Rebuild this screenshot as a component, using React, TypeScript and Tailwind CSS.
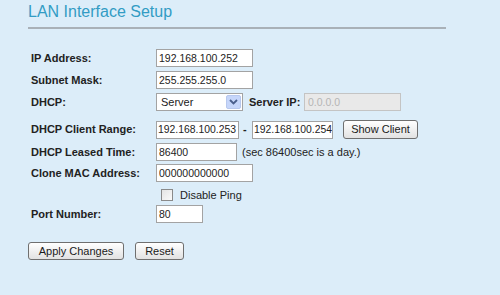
import React from "react";

const inputCls =
  "h-[18px] border border-[#a3a3a3] bg-white pl-[2px] text-[10.5px] text-[#222] outline-none font-['Liberation_Sans',Arial,sans-serif]";
const rangeCls =
  "h-[18px] border border-[#a3a3a3] bg-white pl-[1px] text-[10.4px] text-[#222] outline-none font-['Liberation_Sans',Arial,sans-serif]";

function Label({ children }: { children: React.ReactNode }) {
  return (
    <div className="w-[128px] shrink-0 pl-[3px] text-[11px] font-bold text-[#222]">
      {children}
    </div>
  );
}

function Btn({ children, w }: { children: React.ReactNode; w: string }) {
  return (
    <button
      className={`${w} flex items-center justify-center rounded-[3px] border border-[#6f6f6f] bg-gradient-to-b from-[#ffffff] to-[#e2e2e2] text-[11px] text-[#1a1a1a]`}
    >
      {children}
    </button>
  );
}

export default function App() {
  return (
    <div className="h-[295px] w-[500px] overflow-hidden bg-[#dcedf9] px-[28px] font-['Liberation_Sans',Arial,sans-serif]">
      <div className="pt-[3px]">
        <div className="h-[18px] text-[16px] leading-[18px] text-[#329cc4]">LAN Interface Setup</div>
        <div className="mt-[6px] h-[2px] w-[418px] bg-[#a9b1b8]" />
      </div>

      <div className="mt-[20px] flex flex-col">
        <div className="flex h-[18px] items-center">
          <Label>IP Address:</Label>
          <input readOnly className={`${inputCls} w-[97px]`} defaultValue="192.168.100.252" />
        </div>
        <div className="mt-[4px] flex h-[18px] items-center">
          <Label>Subnet Mask:</Label>
          <input readOnly className={`${inputCls} w-[97px]`} defaultValue="255.255.255.0" />
        </div>
        <div className="mt-[4px] flex h-[18px] items-center">
          <Label>DHCP:</Label>
          <div className="flex h-[18px] w-[87px] items-center justify-between border border-[#a3a3a3] bg-white pl-[4px] pr-[1px]">
            <span className="text-[11px] text-[#222]">Server</span>
            <span className="flex h-[14px] w-[15px] items-center justify-center rounded-[2px] border border-[#b7c8ee] bg-[#c6d6fa]">
              <svg width="9" height="6" viewBox="0 0 9 6">
                <path d="M1 1 L4.5 4.5 L8 1" fill="none" stroke="#4a5f8c" strokeWidth="1.8" />
              </svg>
            </span>
          </div>
          <span className="ml-[6px] w-[55px] text-[11px] font-bold text-[#222]">Server IP:</span>
          <input
            readOnly
            disabled
            className="h-[18px] w-[97px] border border-[#c4c4c4] bg-[#e9e9e9] pl-[3px] text-[10.5px] text-[#b5b5b5] outline-none"
            defaultValue="0.0.0.0"
          />
        </div>
        <div className="mt-[9px] flex h-[19px] items-center">
          <Label>DHCP Client Range:</Label>
          <input readOnly className={`${rangeCls} w-[83px]`} defaultValue="192.168.100.253" />
          <span className="ml-[4px] w-[5px] text-[11px] font-bold text-[#222]">-</span>
          <input readOnly className={`${rangeCls} ml-[4px] w-[81px]`} defaultValue="192.168.100.254" />
          <div className="ml-[10px] h-[19px]">
            <Btn w="w-[75px] h-[19px]">Show Client</Btn>
          </div>
        </div>
        <div className="mt-[4px] flex h-[18px] items-center">
          <Label>DHCP Leased Time:</Label>
          <input readOnly className={`${inputCls} w-[81px]`} defaultValue="86400" />
          <span className="ml-[5px] text-[11px] text-[#222]">(sec 86400sec is a day.)</span>
        </div>
        <div className="mt-[3px] flex h-[18px] items-center">
          <Label>Clone MAC Address:</Label>
          <input readOnly className={`${inputCls} w-[97px]`} defaultValue="000000000000" />
        </div>
        <div className="mt-[5px] flex h-[16px] items-center">
          <div className="w-[128px] shrink-0" />
          <span className="ml-[5px] h-[12px] w-[12px] border border-[#8a8a8a] bg-gradient-to-br from-[#e4e4e4] to-[#fafafa]" />
          <span className="ml-[7px] text-[11px] text-[#222]">Disable Ping</span>
        </div>
        <div className="mt-[2px] flex h-[18px] items-center">
          <Label>Port Number:</Label>
          <input readOnly className={`${inputCls} w-[47px]`} defaultValue="80" />
        </div>
        <div className="mt-[19px] flex h-[18px] items-center">
          <Btn w="w-[96px] h-[18px]">Apply Changes</Btn>
          <div className="ml-[11px]">
            <Btn w="w-[49px] h-[18px]">Reset</Btn>
          </div>
        </div>
      </div>
    </div>
  );
}
